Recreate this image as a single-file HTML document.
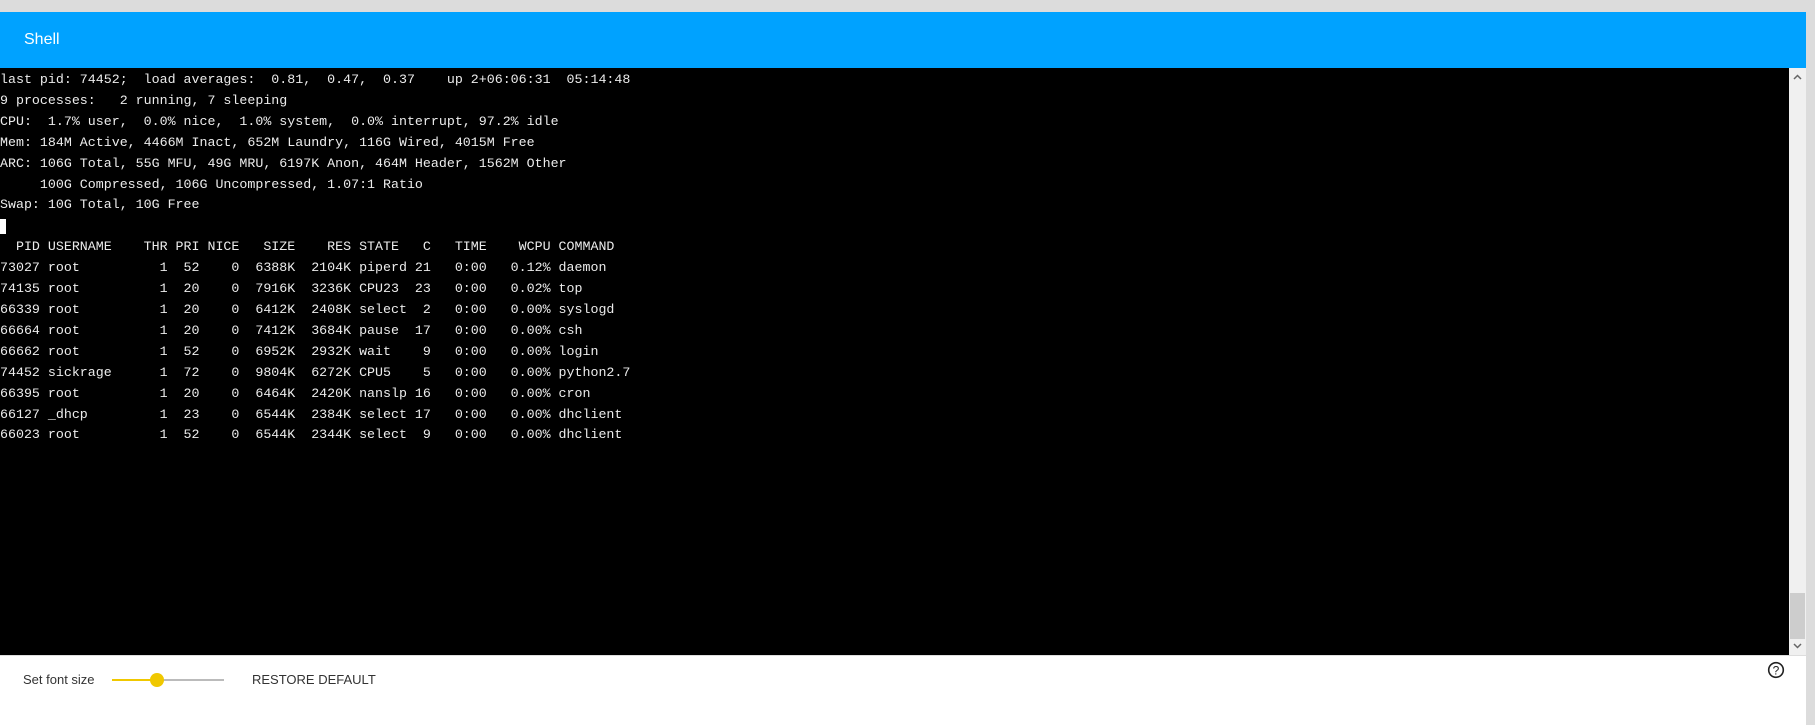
<!DOCTYPE html>
<html><head><meta charset="utf-8"><style>
html,body{margin:0;padding:0;width:1815px;height:724px;overflow:hidden;background:#dcdcdc;font-family:"Liberation Sans",sans-serif}
#top{position:absolute;left:0;top:0;width:1815px;height:12px;background:#dcdcdc}
#bar{position:absolute;left:0;top:12px;width:1806px;height:56px;background:#00a2ff;color:#fff;font-size:16px}
#bar span{position:absolute;left:24px;top:19px}
#term{position:absolute;left:0;top:68px;width:1789px;height:587px;background:#000;overflow:hidden}
pre{margin:0;font-family:"Liberation Mono",monospace;font-size:13.3px;line-height:20.9px;color:#ececec;position:absolute;left:0;top:2px}
#sb{position:absolute;left:1789px;top:68px;width:17px;height:587px;background:#f0f0f0}
#thumb{position:absolute;left:1px;top:525px;width:15px;height:46px;background:#cdcdcd}
#bot{position:absolute;left:0;top:655px;width:1806px;height:69px;background:#fff;border-top:1px solid #ddd}
.lbl{position:absolute;top:16px;font-size:13px;color:#333}
#cursor{position:absolute;left:0;top:151px;width:6px;height:15px;background:#fff}
</style></head><body>
<div id="top"></div>
<div id="bar"><span>Shell</span></div>
<div id="term"><pre>last pid: 74452;  load averages:  0.81,  0.47,  0.37    up 2+06:06:31  05:14:48
9 processes:   2 running, 7 sleeping
CPU:  1.7% user,  0.0% nice,  1.0% system,  0.0% interrupt, 97.2% idle
Mem: 184M Active, 4466M Inact, 652M Laundry, 116G Wired, 4015M Free
ARC: 106G Total, 55G MFU, 49G MRU, 6197K Anon, 464M Header, 1562M Other
     100G Compressed, 106G Uncompressed, 1.07:1 Ratio
Swap: 10G Total, 10G Free

  PID USERNAME    THR PRI NICE   SIZE    RES STATE   C   TIME    WCPU COMMAND
73027 root          1  52    0  6388K  2104K piperd 21   0:00   0.12% daemon
74135 root          1  20    0  7916K  3236K CPU23  23   0:00   0.02% top
66339 root          1  20    0  6412K  2408K select  2   0:00   0.00% syslogd
66664 root          1  20    0  7412K  3684K pause  17   0:00   0.00% csh
66662 root          1  52    0  6952K  2932K wait    9   0:00   0.00% login
74452 sickrage      1  72    0  9804K  6272K CPU5    5   0:00   0.00% python2.7
66395 root          1  20    0  6464K  2420K nanslp 16   0:00   0.00% cron
66127 _dhcp         1  23    0  6544K  2384K select 17   0:00   0.00% dhclient
66023 root          1  52    0  6544K  2344K select  9   0:00   0.00% dhclient</pre><div id="cursor"></div></div>
<div id="sb">
<svg width="17" height="587" style="position:absolute;left:0;top:0"><path d="M5 11 L8.5 7.5 L12 11" stroke="#666" stroke-width="1.5" fill="none"/><path d="M5 576 L8.5 579.5 L12 576" stroke="#666" stroke-width="1.5" fill="none"/></svg>
<div id="thumb"></div></div>
<div id="bot">
<span class="lbl" style="left:23px">Set font size</span>
<div style="position:absolute;left:112px;top:23px;width:112px;height:2px;background:#bbb"></div>
<div style="position:absolute;left:112px;top:23px;width:45px;height:2px;background:#f0c800"></div>
<div style="position:absolute;left:150px;top:17px;width:14px;height:14px;border-radius:50%;background:#f0c800"></div>
<span class="lbl" style="left:252px">RESTORE DEFAULT</span>
<svg style="position:absolute;left:1767px;top:5px" width="18" height="18"><circle cx="9" cy="9" r="7.3" stroke="#222" stroke-width="1.6" fill="none"/><text x="9" y="13.5" font-size="12" font-family="Liberation Sans" text-anchor="middle" fill="#222">?</text></svg>
</div>
</body></html>
